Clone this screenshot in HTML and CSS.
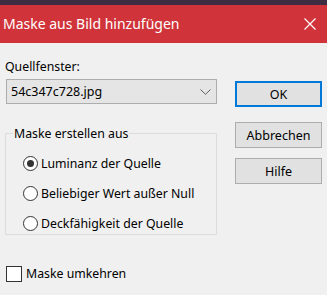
FILE: index.html
```html
<!DOCTYPE html>
<html lang="de">
<head>
    <meta charset="UTF-8">
    <title>Maske aus Bild hinzufügen</title>
    <link rel="stylesheet" href="styles.css">
</head>
<body>
    <div class="strip"></div>
    <header class="titlebar">
        <span class="title">Maske aus Bild hinzufügen</span>
        <svg class="close" width="12" height="12" viewBox="0 0 12 12">
            <path d="M0.5 0.5 L11.5 11.5 M11.5 0.5 L0.5 11.5" stroke="#fff" stroke-width="1.2" fill="none"/>
        </svg>
    </header>
    <main class="dialog">
        <div class="left">
            <div class="label">Quellfenster:</div>
            <div class="combo">
                <span>54c347c728.jpg</span>
                <svg class="chev" width="11" height="6" viewBox="0 0 11 6">
                    <path d="M0.5 0.5 L5.5 5.3 L10.5 0.5" stroke="#606060" stroke-width="1" fill="none"/>
                </svg>
            </div>
            <fieldset class="group">
                <legend>Maske erstellen aus</legend>
                <label class="radio"><span class="dot checked"></span>Luminanz der Quelle</label>
                <label class="radio"><span class="dot"></span>Beliebiger Wert außer Null</label>
                <label class="radio"><span class="dot"></span>Deckfähigkeit der Quelle</label>
            </fieldset>
            <label class="check"><span class="box"></span>Maske umkehren</label>
        </div>
        <div class="right">
            <button class="btn default">OK</button>
            <button class="btn">Abbrechen</button>
            <button class="btn">Hilfe</button>
        </div>
    </main>
</body>
</html>
```

FILE: styles.css
```css
body {
    margin: 0;
    width: 327px;
    height: 295px;
    background: #f0f0f0;
    font-family: "Noto Sans", sans-serif;
    font-size: 12.3px;
    color: #000;
    overflow: hidden;
}
.strip {
    height: 5px;
    background: #3e2d42;
}
.titlebar {
    height: 38px;
    background: #d0343a;
    color: #fff;
    display: flex;
    align-items: center;
    justify-content: space-between;
    padding: 0 11px 0 3px;
}
.title {
    font-size: 14px;
    margin-top: -2px;
}
.close {
    margin-top: -1px;
}
.dialog {
    display: flex;
    padding: 0 5px 0 5px;
}
.left {
    width: 212px;
}
.label {
    margin: 15px 0 0 0;
    line-height: 17px;
}
.combo {
    margin: 4px 0 0 1px;
    height: 23px;
    border: 1px solid #adadad;
    background: #e5e5e5;
    display: flex;
    align-items: center;
    justify-content: space-between;
    padding: 0 5px 0 4px;
    font-size: 12.5px;
}
.chev {
    margin-top: 1px;
}
.group {
    margin: 21px 0 0 0;
    padding: 6px 0 0 17px;
    height: 110px;
    border: 1px solid #dcdcdc;
    box-sizing: border-box;
}
.group legend {
    padding: 0 1px;
    margin-left: -10px;
    font-size: 12.3px;
    line-height: 17px;
}
.radio {
    display: flex;
    align-items: center;
    height: 30px;
}
.dot {
    width: 13px;
    height: 13px;
    border: 1px solid #333;
    border-radius: 50%;
    background: #fff;
    margin-right: 3px;
    box-sizing: content-box;
    position: relative;
}
.dot.checked::after {
    content: "";
    position: absolute;
    left: 3px;
    top: 3px;
    width: 7px;
    height: 7px;
    border-radius: 50%;
    background: #333;
}
.check {
    display: flex;
    align-items: center;
    margin: 30px 0 0 1px;
}
.box {
    width: 14px;
    height: 14px;
    border: 1px solid #333;
    background: #fff;
    margin-right: 4px;
}
.right {
    display: flex;
    flex-direction: column;
    margin: 38px 0 0 18px;
    width: 87px;
}
.btn {
    height: 26px;
    border: 1px solid #adadad;
    background: #e1e1e1;
    font-family: "Noto Sans", sans-serif;
    font-size: 12.5px;
    color: #000;
    margin-bottom: 10px;
    padding: 0;
}
.btn.default {
    border: 2px solid #0078d7;
    margin-bottom: 15px;
}
```
